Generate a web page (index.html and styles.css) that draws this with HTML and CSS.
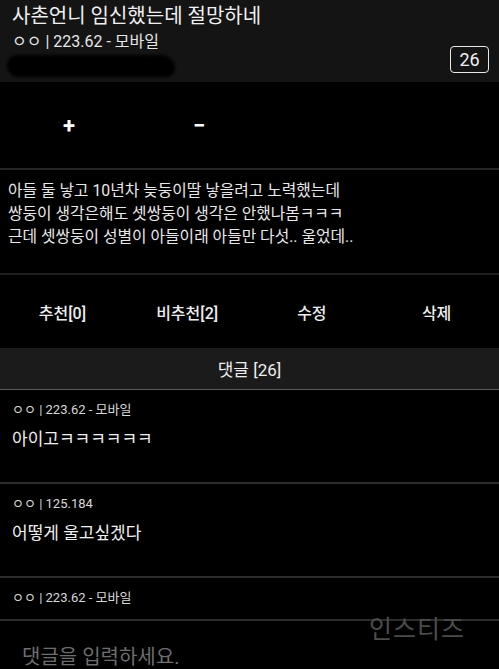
FILE: index.html
```html
<!DOCTYPE html>
<html lang="ko">
<head>
    <meta charset="UTF-8">
    <meta name="viewport" content="width=device-width, initial-scale=1.0">
    <title>사촌언니 임신했는데 절망하네</title>
    <link rel="stylesheet" href="styles.css">
</head>
<body>
    <div class="post-head">
        <h1 class="title">사촌언니 임신했는데 절망하네</h1>
        <div class="head-row">
            <div class="head-left">
                <div class="writer">ㅇㅇ | 223.62 - 모바일</div>
                <div class="scribble"></div>
            </div>
            <span class="count-badge">26</span>
        </div>
    </div>

    <div class="vote-row">
        <span class="vote">+</span>
        <span class="vote">−</span>
    </div>

    <div class="post-body">
        <p>아들 둘 낳고 10년차 늦둥이딸 낳을려고 노력했는데<br>
        쌍둥이 생각은해도 셋쌍둥이 생각은 안했나봄ㅋㅋㅋ<br>
        근데 셋쌍둥이 성별이 아들이래 아들만 다섯.. 울었데..</p>
    </div>

    <div class="actions">
        <a href="#">추천[0]</a>
        <a href="#">비추천[2]</a>
        <a href="#">수정</a>
        <a href="#">삭제</a>
    </div>

    <div class="comment-head">댓글 [26]</div>

    <div class="comment">
        <div class="comment-meta">ㅇㅇ | 223.62 - 모바일</div>
        <div class="comment-text">아이고ㅋㅋㅋㅋㅋㅋ</div>
    </div>
    <div class="comment">
        <div class="comment-meta">ㅇㅇ | 125.184</div>
        <div class="comment-text">어떻게 울고싶겠다</div>
    </div>
    <div class="comment comment-last">
        <div class="comment-meta">ㅇㅇ | 223.62 - 모바일</div>
    </div>

    <div class="comment-input">댓글을 입력하세요.</div>
    <div class="watermark">인스티즈</div>
</body>
</html>
```

FILE: styles.css
```css
body {
    margin: 0;
    background-color: #000;
    color: #ececec;
    font-family: Roboto, "Noto Sans CJK KR", sans-serif;
    height: 669px;
    overflow: hidden;
    position: relative;
}

.post-head {
    background-color: #141414;
    height: 82px;
    padding: 3px 10px 0 12px;
    box-sizing: border-box;
}

.title {
    margin: 0;
    font-size: 20px;
    font-weight: 400;
    line-height: 26px;
    color: #f0f0f0;
}

.head-row {
    display: flex;
    justify-content: space-between;
    align-items: flex-start;
}

.writer {
    font-size: 16px;
    line-height: 22px;
    margin-top: 2px;
    color: #e6e6e6;
}

.scribble {
    width: 168px;
    height: 22px;
    margin: 2px 0 0 -5px;
    background-color: #000;
    border-radius: 11px 14px 9px 12px;
    filter: blur(1.5px);
}

.count-badge {
    margin-top: 17px;
    width: 37px;
    height: 25px;
    border: 1.5px solid #e8e8e8;
    border-radius: 4px;
    font-size: 18px;
    line-height: 25px;
    text-align: center;
    color: #f0f0f0;
}

.vote-row {
    display: flex;
    height: 86px;
    padding-left: 4px;
    align-items: center;
    border-bottom: 2px solid #262626;
}

.vote {
    width: 130px;
    text-align: center;
    font-size: 22px;
    font-weight: 700;
    color: #fff;
}

.post-body {
    height: 105px;
    padding: 9px 8px 0 8px;
    box-sizing: border-box;
    border-bottom: 2px solid #1e1e1e;
}

.post-body p {
    margin: 0;
    font-size: 15.8px;
    line-height: 23px;
    color: #e8e8e8;
}

.actions {
    display: grid;
    grid-template-columns: repeat(4, 1fr);
    height: 73px;
    align-items: center;
}

.actions a {
    text-align: center;
    color: #ededed;
    text-decoration: none;
    font-size: 16px;
    font-weight: 500;
}

.comment-head {
    background-color: #1b1b1b;
    height: 41px;
    line-height: 44px;
    text-align: center;
    font-size: 17px;
    color: #eee;
    border-bottom: 1px solid #5a5a5a;
}

.comment {
    height: 94px;
    padding: 11px 12px 0 12px;
    box-sizing: border-box;
    border-bottom: 2px solid #2c2c2c;
}

.comment-meta {
    font-size: 13px;
    line-height: 18px;
    color: #d8d8d8;
}

.comment-text {
    margin-top: 8px;
    font-size: 17px;
    line-height: 24px;
    color: #f0f0f0;
}

.comment-last {
    height: 43px;
}

.comment-input {
    padding: 20px 0 0 22px;
    font-size: 20px;
    color: #6e6e6e;
}

.watermark {
    position: absolute;
    left: 369px;
    top: 609px;
    font-size: 25px;
    color: #4c4c4c;
    letter-spacing: 1px;
}
```
